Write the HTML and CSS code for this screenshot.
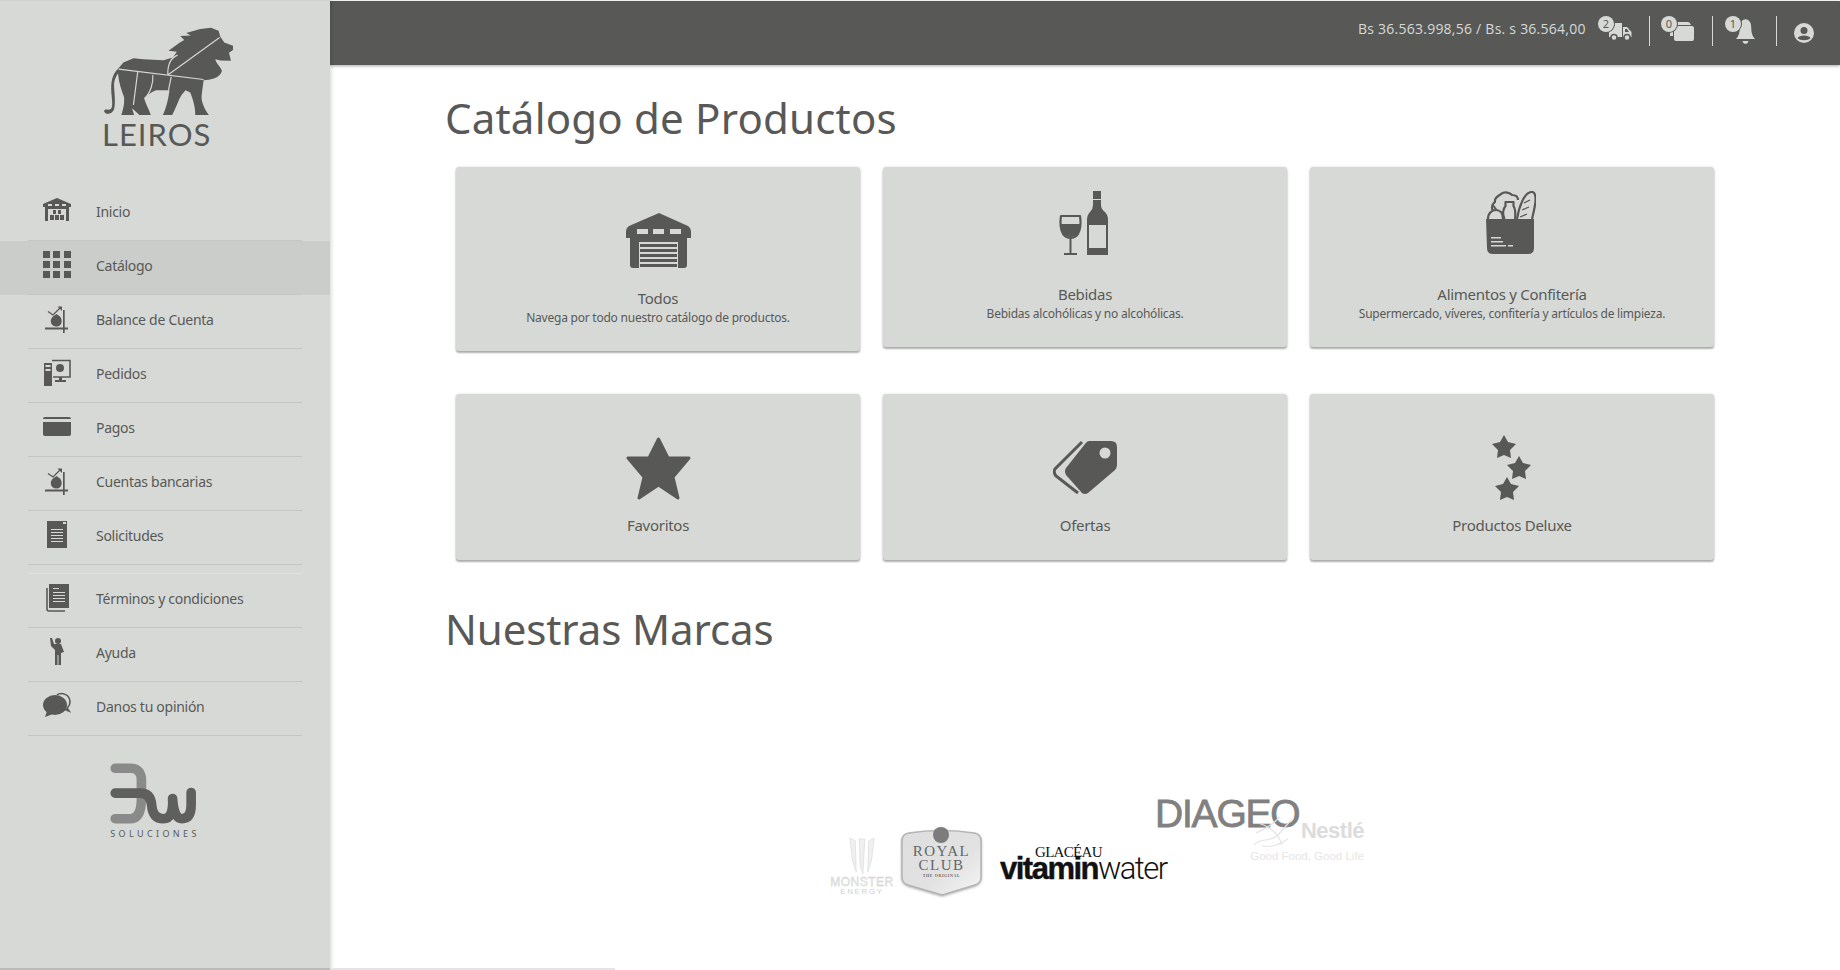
FILE: index.html
```html
<!DOCTYPE html>
<html lang="es">
<head>
<meta charset="utf-8">
<title>Catálogo de Productos</title>
<link rel="stylesheet" href="styles.css">
</head>
<body>
<div class="app">
  <aside class="sidebar">
    <div class="brand">
      <svg class="lion" viewBox="300 70 410 290">
        <path class="ink" d="M312 330C316 342 335 342 342 326C348 305 342 270 342 248C344 235 348 226 354 218C356 245 364 268 372 288C374 310 368 328 364 342H402L396 322L418 342H452C447 325 436 308 432 292C442 282 456 272 468 268L508 268C505 290 500 318 488 342H516C526 325 534 298 544 282L556 268L570 275C578 295 586 320 585 342H626C614 326 603 305 604 285L610 238C630 238 660 232 665 210C660 196 648 188 645 175L660 179L692 180L686 156L698 148V135L672 125L660 108L655 90L632 81L600 85L558 97L572 104L540 106L552 118L538 126L505 150L530 153L518 170L490 178L430 175L400 172L370 185L352 206C336 222 332 245 334 275C336 300 340 322 330 326C322 328 316 322 312 330Z"/>
        <path class="cut" d="M356 205L610 236M505 221L658 110M413 212L400 312M458 222C460 245 452 275 434 292M513 228L505 268M532 163C510 172 502 190 503 221"/>
      </svg>
      <div class="wordmark">LEIROS</div>
    </div>
    <nav class="menu">
      <a class="item"><span class="row">
        <svg class="nav-icon" viewBox="0 0 28 28"><path class="ink" d="M0 7L14 1L28 7V10H26V24H2V10H0Z"/><path class="bg" d="M5 7h4v2H5zM12 7h4v2h-4zM19 7h4v2h-4zM5 12h18v12H5z"/><path class="ink" d="M10 13h3v4h-3zM15 13h3v4h-3zM7 18h4v5H7zM12 18h4v5h-4zM17 18h4v5h-4z"/></svg>
        <span class="label">Inicio</span></span></a>
      <a class="item active"><span class="row">
        <svg class="nav-icon" viewBox="0 0 28 28"><path class="ink" d="M0 0h7v7H0zM10 0h7v7h-7zM21 0h7v7h-7zM0 10h7v7H0zM10 10h7v7h-7zM21 10h7v7h-7zM0 20h7v7H0zM10 20h7v7h-7zM21 20h7v7h-7z"/></svg>
        <span class="label">Catálogo</span></span></a>
      <a class="item"><span class="row">
        <svg class="nav-icon" viewBox="0 0 28 28"><path class="ink" d="M2 22.500h23v2H2zM20 5h1.700v23H20z"/><path class="ink" d="M13.500 9L10 11.500C6 15 7.500 21.500 13.500 21.500C19 21.500 20 15 17 11.500Z"/><path class="line-fine" d="M5 6.500L10 10L17 3"/><path class="ink" d="M14.500 1.500H19V6Z"/></svg>
        <span class="label">Balance de Cuenta</span></span></a>
      <a class="item"><span class="row">
        <svg class="nav-icon" viewBox="0 0 28 28"><path class="ink" d="M1 4h8v23H1z"/><path class="bg" d="M2.500 6h5v2h-5zM2.500 10h5v2h-5z"/><path class="frame" d="M9 1.500H27V18H10"/><circle class="ink" cx="17" cy="9" r="4"/><path class="ink" d="M16 18h3v3h4v2H12v-2h4z"/></svg>
        <span class="label">Pedidos</span></span></a>
      <a class="item"><span class="row">
        <svg class="nav-icon" viewBox="0 0 28 28"><path class="ink" d="M2 4H26Q28 4 28 6H0Q0 4 2 4ZM0 9H28V21Q28 23 26 23H2Q0 23 0 21Z"/></svg>
        <span class="label">Pagos</span></span></a>
      <a class="item"><span class="row">
        <svg class="nav-icon" viewBox="0 0 28 28"><path class="ink" d="M2 22.500h23v2H2zM20 5h1.700v23H20z"/><path class="ink" d="M13.500 9L10 11.500C6 15 7.500 21.500 13.500 21.500C19 21.500 20 15 17 11.500Z"/><path class="line-fine" d="M5 6.500L10 10L17 3"/><path class="ink" d="M14.500 1.500H19V6Z"/></svg>
        <span class="label">Cuentas bancarias</span></span></a>
      <a class="item"><span class="row">
        <svg class="nav-icon" viewBox="0 0 28 28"><path class="ink" d="M4 0H24V27H4Z"/><path class="bg" d="M8 8h12v1H8zM8 11h12v1H8zM8 14h12v1H8zM8 17h12v1H8zM8 20h12v1H8zM20 1h3v2h-3z"/></svg>
        <span class="label">Solicitudes</span></span></a>
    </nav>
    <nav class="menu second">
      <a class="item"><span class="row">
        <svg class="nav-icon" viewBox="0 0 28 28"><path class="ink" d="M6 0H26V24H6Z"/><path class="frame" d="M4 4V25Q4 27 6 27H22"/><path class="bg" d="M10 4h6v1h-6zM10 8h12v1H10zM10 11h12v1H10zM10 14h12v1H10zM10 17h12v1H10z"/></svg>
        <span class="label">Términos y condiciones</span></span></a>
      <a class="item"><span class="row">
        <svg class="nav-icon" viewBox="0 0 28 28"><circle class="ink" cx="15" cy="3" r="3"/><path class="ink" d="M7 0L9 0L11 6H18L21 14L18 15V27H15.500V17H14.500V27H12V12L8 8Z"/></svg>
        <span class="label">Ayuda</span></span></a>
      <a class="item"><span class="row">
        <svg class="nav-icon" viewBox="0 0 28 28"><path class="frame" d="M14 3C18 0 27 2 27 10C27 14 25 15 24 16L26 19L21 17"/><ellipse class="ink" cx="12" cy="13" rx="12" ry="10"/><path class="ink" d="M4 19L2 25L10 22Z"/></svg>
        <span class="label">Danos tu opinión</span></span></a>
    </nav>
    <div class="maker">
      <svg class="maker-mark" viewBox="330 570 270 190">
        <path class="maker-light" d="M345 589H390Q424 589 424 625V680Q424 741 390 741H345"/>
        <path class="maker-dark" d="M345 664H420Q452 664 455 700Q458 741 490 741Q522 741 518 680Q522 741 546 741Q574 741 574 700V662"/>
      </svg>
      <div class="maker-name">SOLUCIONES</div>
    </div>
  </aside>

  <div class="content">
    <header class="topbar">
      <span class="rate">Bs 36.563.998,56 / Bs. s 36.564,00</span>
      <div class="tool tool-truck">
        <span class="badge">2</span>
        <svg class="tool-icon" viewBox="0 0 25 18"><path class="pale" d="M2 0H15V14H2ZM16 4H20L24.500 9V14H16Z"/><path class="dark" d="M18 6H20L22 9H18Z"/><circle class="pale-ring" cx="7" cy="14.500" r="3"/><circle class="pale-ring" cx="20" cy="14.500" r="3"/></svg>
      </div>
      <div class="tool tool-chat">
        <span class="badge">0</span>
        <svg class="tool-icon" viewBox="0 0 24 20"><path class="pale" d="M6 0H18Q20 0 21 3H7Q6 3 6 0ZM4 4H22Q24 4 24 6V17Q24 19 22 19H6Q4 19 4 17ZM0 10H3V14H0Z"/></svg>
      </div>
      <div class="tool tool-bell">
        <span class="badge">1</span>
        <svg class="tool-icon" viewBox="0 0 20 26"><path class="pale" d="M10 0C14 0 16 4 16 8C16 14 17 18 20 21H0C3 18 4 14 4 8C4 4 6 0 10 0ZM7 23H13C13 25 11 26 10 26C9 26 7 25 7 23Z"/></svg>
      </div>
      <div class="tool tool-user">
        <svg class="tool-icon" viewBox="0 0 20 20"><circle class="pale" cx="10" cy="10" r="10"/><circle class="dark" cx="10" cy="7.500" r="3.500"/><path class="dark" d="M3.500 15C5 11.500 15 11.500 16.500 15C14 18 6 18 3.500 15Z"/></svg>
      </div>
    </header>

    <main class="page">
      <h1 class="heading">Catálogo de Productos</h1>
      <section class="cards">
        <a class="card card-todos">
          <svg class="card-icon icon-a" viewBox="0 0 65 55"><path class="ink" d="M33 0L62 13Q65 15 65 19V25H61V52Q61 55 58 55H7Q4 55 4 52V25H0V19Q0 15 3 13Z"/><path class="bg" d="M11 16h11v5H11zM27 16h11v5H27zM44 16h11v5H44zM13 29h39v26H13z"/><path class="ink" d="M14 31h37v3H14zM14 36h37v3H14zM14 41h37v3H14zM14 46h37v3H14zM14 51h37v3H14z"/></svg>
          <div class="card-title">Todos</div>
          <div class="card-text">Navega por todo nuestro catálogo de productos.</div>
        </a>
        <a class="card card-tall">
          <svg class="card-icon icon-b" viewBox="0 0 50 64"><path class="ink" d="M34 0H42V8H34ZM34 9H42V14Q42 18 46 21Q49 24 49 29V64H28V29Q28 24 31 21Q34 18 34 14Z"/><path class="bg" d="M30 34H47V57H30Z"/><path class="frame-heavy" d="M2 25H21C22.500 35 21 47 11.500 47C2 47 .5 35 2 25Z"/><path class="ink" d="M2 33H21C21 41 18 46 11.500 46C5 46 2 41 2 33Z"/><path class="ink" d="M10.500 47H12.500V62H18V64H5V62H10.500Z"/></svg>
          <div class="card-title">Bebidas</div>
          <div class="card-text">Bebidas alcohólicas y no alcohólicas.</div>
        </a>
        <a class="card card-tall">
          <svg class="card-icon icon-b" viewBox="0 0 50 64"><path class="frame-heavy" d="M7 20C4 14 8 12 9 11C8 6 13 5 15 3C19 0 24 2 26 4C30 4 32 6 32 9"/><path class="frame-heavy" d="M2 28C2 22 6 19 10 19C14 19 17 22 17 28"/><path class="ink" d="M9 19L6 14L8 14L11 18Z"/><path class="frame-heavy" d="M18.500 28C16 22 17 18 19.500 15V11H27.500V15C30 19 29.500 24 29 28"/><path class="frame-heavy" d="M31 28C33 16 38 2 45 1C50 0 50 8 49 14C48 20 47 24 46 28"/><path class="line-fine" d="M38 12l6-3M36 19l7-3M34 26l7-3"/><path class="ink" d="M0 28H48V57Q48 63 42 63H7Q1 63 1 57Z"/><path class="bg" d="M5 46h10v1.500H5zM5 50h12v1.500H5zM5 54h15v1.500H5zM22 54h5v1.500h-5z"/></svg>
          <div class="card-title">Alimentos y Confitería</div>
          <div class="card-text">Supermercado, víveres, confitería y artículos de limpieza.</div>
        </a>
        <a class="card card-short">
          <svg class="card-icon icon-c" viewBox="0 0 65 65"><path class="ink star-join" d="M32.500 4L42 23H63L47 42L52 63L32.500 50L13 63L18 42L2 23H23Z"/></svg>
          <div class="card-title">Favoritos</div>
        </a>
        <a class="card card-short">
          <svg class="card-icon icon-c" viewBox="0 0 65 65"><path class="frame-wide" d="M29 7L2 34Q0 37 3 41L25 58"/><path class="ink" d="M36 6H58Q64 6 64 12V30Q64 33 62 35L35 58Q32 60 29 58L13 40Q11 36 13 33L32 9Q34 6 36 6Z"/><circle class="bg" cx="52" cy="18" r="5.500"/></svg>
          <div class="card-title">Ofertas</div>
        </a>
        <a class="card card-short">
          <svg class="card-icon icon-c" viewBox="0 0 40 65"><path class="ink" d="M12 0L16 7L24 9L18 15L19 23L12 20L5 23L6 15L0 9L8 7Z"/><path class="ink" d="M27 21L31 28L39 30L33 36L34 44L27 41L20 44L21 36L15 30L23 28Z"/><path class="ink" d="M15 42L19 49L27 51L21 57L22 65L15 62L8 65L9 57L3 51L11 49Z"/></svg>
          <div class="card-title">Productos Deluxe</div>
        </a>
      </section>
      <h2 class="heading heading-brands">Nuestras Marcas</h2>
      <section class="brands">
        <div class="brand-monster">
          <svg class="monster-claw" viewBox="0 0 30 40"><path class="claw" d="M2 0L8 3L9 36L5 24ZM12 1H18L16 38L13 30ZM28 0L22 3L21 36L25 24Z"/></svg>
          <div class="monster-name">MONSTER</div>
          <div class="monster-sub">ENERGY</div>
        </div>
        <div class="brand-royal">
          <svg class="royal-shield" viewBox="0 0 81 69">
            <defs><linearGradient id="royalFill" x1="0" y1="0" x2="1" y2="1"><stop offset="0" stop-color="#dedede"/><stop offset=".6" stop-color="#e2e2e2"/><stop offset="1" stop-color="#f6f6f6"/></linearGradient></defs>
            <path class="royal-plate" d="M8 6Q41 1 73 6Q80 7 80 14V50Q80 56 74 58L41 68L7 58Q1 56 1 50V14Q1 7 8 6Z"/>
            <circle class="royal-seal" cx="40" cy="8" r="8"/>
          </svg>
          <div class="royal-name">ROYAL<br>CLUB</div>
          <div class="royal-sub">THE ORIGINAL</div>
        </div>
        <div class="brand-vitamin">
          <div class="vitamin-top">GLACÉAU</div>
          <div class="vitamin-name"><b>vitamin</b><span class="vitamin-thin">water</span></div>
        </div>
        <div class="brand-diageo">DIAGEO</div>
        <div class="brand-nestle">
          <svg class="nestle-nest" viewBox="0 0 44 34"><path class="nest-line" d="M2 30C8 22 18 28 26 20L40 4M6 8C14 10 26 16 30 30M4 18C14 14 22 8 28 2M10 31C20 33 30 28 36 24"/></svg>
          <div class="nestle-name">Nestlé</div>
          <div class="nestle-sub">Good Food, Good Life</div>
        </div>
      </section>
    </main>
  </div>
</div>
<div class="foot-line"></div>
</body>
</html>
```
FILE: styles.css
```css
* { box-sizing: border-box; }
html, body { margin: 0; height: 100%; overflow: hidden; background: #fff; }
body { font-family: "Noto Sans", "Open Sans", sans-serif; color: #585957; position: relative; }
.app { display: flex; height: 970px; }

.ink { fill: #585957; }
.bg { fill: #d7d9d6; }
.line { fill: none; stroke: #585957; stroke-width: 2; }
.line-fine { fill: none; stroke: #585957; stroke-width: 1.300; }
.frame { fill: none; stroke: #585957; stroke-width: 1.600; }
.frame-heavy { fill: none; stroke: #585957; stroke-width: 2.200; stroke-linejoin: round; }
.frame-wide { fill: none; stroke: #585957; stroke-width: 3; }
.star-join { stroke: #585957; stroke-width: 3; stroke-linejoin: round; }

.sidebar { width: 330px; flex: none; background: #d7d9d6; box-shadow: 2px 0 3px rgba(0,0,0,.12); position: relative; z-index: 2; border-top: 1px solid #cfd1ce; }
.brand { height: 186px; display: flex; flex-direction: column; align-items: flex-start; padding: 23px 0 0 100px; }
.lion { width: 137px; height: 97px; display: block; }
.lion .cut { fill: none; stroke: #d7d9d6; stroke-width: 3.500; }
.wordmark { font-family: "Lato", sans-serif; font-weight: 400; font-size: 31px; line-height: 26px; letter-spacing: 1px; margin-left: 2px; }

.menu { display: flex; flex-direction: column; }
.menu.second { margin: 8px 28px 0; border-top: 1px solid #dfe1de; }
.menu.second .item { margin: 0 -28px; }
.item { display: block; height: 54px; padding: 0 28px; }
.item.active { background: #cbcdca; }
.row { display: flex; align-items: center; height: 54px; border-bottom: 1px solid #c4c6c3; padding: 0 0 5px 15px; }
.nav-icon { width: 28px; height: 28px; flex: none; margin-right: 25px; display: block; }
.label { font-size: 14px; letter-spacing: -.28px; }

.maker { display: flex; flex-direction: column; align-items: center; padding: 26px 20px 0 0; }
.maker-mark { width: 90px; height: 63px; display: block; }
.maker-light { fill: none; stroke: #8a8a8a; stroke-width: 29; stroke-linecap: round; }
.maker-dark { fill: none; stroke: #5f5f5e; stroke-width: 29; stroke-linecap: round; stroke-linejoin: round; }
.maker-name { font-size: 9px; letter-spacing: 3.400px; line-height: 12px; margin-top: 3px; }

.content { flex: 1; display: flex; flex-direction: column; min-width: 0; }
.topbar { height: 64px; margin-top: 1px; flex: none; background: #585957; box-shadow: 0 1px 3px rgba(0,0,0,.35); display: flex; align-items: flex-start; color: #d7d9d6; padding-left: 1028px; position: relative; }
.rate { font-family: "Open Sans", sans-serif; font-size: 14px; line-height: 20px; letter-spacing: .24px; margin-top: 18px; width: 248px; white-space: nowrap; }
.tool { position: relative; height: 30px; margin-top: 15px; display: flex; align-items: flex-end; border-right: 1px solid #d7d9d6; }
.tool-truck { width: 44px; padding-left: 1px; padding-bottom: 5px; }
.tool-chat { width: 63px; padding-left: 20px; padding-bottom: 4px; }
.tool-bell { width: 64px; padding-left: 23px; padding-bottom: 2px; }
.tool-user { width: 50px; border-right: 0; padding-left: 17px; padding-bottom: 3px; }
.tool-truck .tool-icon { width: 25px; height: 18px; }
.tool-chat .tool-icon { width: 24px; height: 20px; }
.tool-bell .tool-icon { width: 19px; height: 25px; }
.tool-user .tool-icon { width: 20px; height: 20px; }
.pale { fill: #d7d9d6; }
.pale-ring { fill: #d7d9d6; stroke: #585957; stroke-width: 1.500; }
.dark { fill: #585957; }
.badge { position: absolute; top: 0; width: 16px; height: 16px; border-radius: 50%; background: #d7d9d6; color: #585957; font-size: 11px; line-height: 16px; text-align: center; z-index: 1; box-shadow: 0 0 0 1px #585957; }
.tool-truck .badge { left: -8px; }
.tool-chat .badge { left: 11px; }
.tool-bell .badge { left: 12px; }

.page { padding: 28px 0 0 115px; flex: 1; min-height: 0; }
.heading { font-family: "Noto Sans", sans-serif; font-weight: 400; font-size: 42px; line-height: 50px; margin: 0; letter-spacing: .2px; color: #585957; }
.cards { display: grid; grid-template-columns: repeat(3, 404px); column-gap: 23px; row-gap: 43px; margin: 24px 0 0 11px; align-items: start; }
.card { display: flex; flex-direction: column; align-items: center; background: #d7d9d6; border-radius: 3px; box-shadow: 0 2px 2px rgba(0,0,0,.3), 0 0 3px rgba(0,0,0,.12); padding-bottom: 25px; }
.card-todos { padding-top: 46px; }
.card-tall { padding-top: 24px; }
.card-short { padding-top: 41px; height: 166px; }
.card-icon { display: block; }
.icon-a { width: 65px; height: 55px; margin-bottom: 20px; }
.icon-b { width: 50px; height: 64px; margin: 0 3px 29px 0; }
.icon-c { height: 65px; margin-bottom: 15px; }
.card-title { font-size: 15px; line-height: 20px; letter-spacing: -.28px; }
.card-text { font-size: 12px; line-height: 16px; margin-top: 2px; letter-spacing: -.23px; }

.heading-brands { margin-top: 44px; letter-spacing: -.1px; }
.brands { display: flex; align-items: flex-start; margin: 0 0 0 385px; padding-top: 145px; }
.brand-monster { width: 64px; margin-top: 39px; text-align: center; }
.monster-claw { width: 34px; height: 38px; display: block; margin: 0 auto; }
.claw { fill: #efefef; stroke: #d0d0d0; stroke-width: .5; }
.monster-name { font-family: "Liberation Sans", sans-serif; font-size: 12px; line-height: 12px; letter-spacing: .5px; color: #f0f0f0; -webkit-text-stroke: .35px #c8c8c8; }
.monster-sub { font-family: "Liberation Sans", sans-serif; font-size: 8px; line-height: 7px; letter-spacing: 1.600px; color: #d0d0d0; }
.brand-royal { width: 81px; height: 69px; margin: 28px 0 0 7px; text-align: center; color: #666; position: relative; font-family: "Liberation Serif", serif; padding-top: 17px; }
.royal-shield { position: absolute; left: 0; top: 0; width: 81px; height: 69px; filter: drop-shadow(0 1px 1px rgba(0,0,0,.3)); }
.royal-plate { fill: url(#royalFill); stroke: #b4b4b4; stroke-width: 1.500; }
.royal-seal { fill: #7c7c7c; }
.royal-name { position: relative; font-size: 15px; line-height: 14px; letter-spacing: 1.500px; }
.royal-sub { position: relative; font-size: 4px; line-height: 8px; letter-spacing: .6px; font-weight: 700; }
.brand-vitamin { width: 167px; margin: 48px 0 0 18px; color: #111; font-family: "Liberation Sans", sans-serif; }
.vitamin-top { font-family: "Liberation Serif", serif; font-size: 15px; line-height: 11px; margin-left: 35px; letter-spacing: -.7px; }
.vitamin-name { font-size: 31px; line-height: 24px; letter-spacing: -1.5px; white-space: nowrap; margin-top: -1px; }
.vitamin-name b { font-weight: 700; -webkit-text-stroke: .4px #111; }
.vitamin-thin { font-family: "Roboto", sans-serif; font-weight: 300; letter-spacing: -1.6px; }
.brand-diageo { font-family: "Liberation Sans", sans-serif; font-size: 39px; line-height: 30px; margin: 0 0 0 -12px; color: #808080; letter-spacing: -1.2px; width: 143px; -webkit-text-stroke: .8px #808080; }
.brand-nestle { width: 112px; margin: 22px 0 0 -46px; text-align: right; font-family: "Liberation Sans", sans-serif; color: #e6e6e6; position: relative; }
.nestle-nest { position: absolute; left: 0; top: -6px; width: 44px; height: 34px; }
.nest-line { fill: none; stroke: #e4e4e4; stroke-width: 1.200; }
.nestle-name { font-size: 22px; line-height: 20px; font-weight: 700; color: #dcdcdc; letter-spacing: -.5px; }
.nestle-sub { font-size: 11.500px; line-height: 14px; margin-top: 8px; white-space: nowrap; display: flex; justify-content: flex-end; }

.foot-line { position: absolute; left: 0; top: 968px; width: 615px; height: 2px; background: linear-gradient(to right, #b9bbb8 330px, #e4e4e4 330px); z-index: 3; }
```
